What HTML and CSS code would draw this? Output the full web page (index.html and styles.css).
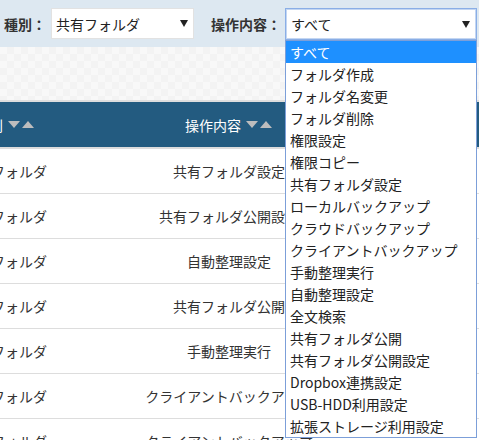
FILE: index.html
```html
<!DOCTYPE html>
<html lang="ja">
<head>
<meta charset="utf-8">
<link rel="stylesheet" href="styles.css">
</head>
<body>
<div class="filterbar">
  <span class="label label-type">種別：</span>
  <div class="select select-type">
    <span class="select-text">共有フォルダ</span>
    <span class="caret"></span>
  </div>
  <span class="label label-op">操作内容：</span>
  <div class="select select-op">
    <span class="select-text">すべて</span>
    <span class="caret"></span>
    <ul class="dropdown">
      <li class="selected">すべて</li>
      <li>フォルダ作成</li>
      <li>フォルダ名変更</li>
      <li>フォルダ削除</li>
      <li>権限設定</li>
      <li>権限コピー</li>
      <li>共有フォルダ設定</li>
      <li>ローカルバックアップ</li>
      <li>クラウドバックアップ</li>
      <li>クライアントバックアップ</li>
      <li>手動整理実行</li>
      <li>自動整理設定</li>
      <li>全文検索</li>
      <li>共有フォルダ公開</li>
      <li>共有フォルダ公開設定</li>
      <li>Dropbox連携設定</li>
      <li>USB-HDD利用設定</li>
      <li>拡張ストレージ利用設定</li>
    </ul>
  </div>
</div>
<div class="toolarea"></div>
<table class="log">
  <thead>
    <tr>
      <th class="c1">種別<svg class="sort" width="27" height="8" viewBox="0 0 27 8"><polygon points="0,0 12,0 6,7" /><polygon points="14,7 26,7 20,0" /></svg></th>
      <th class="c2">操作内容<svg class="sort" width="27" height="8" viewBox="0 0 27 8"><polygon points="0,0 12,0 6,7" /><polygon points="14,7 26,7 20,0" /></svg></th>
      <th class="c3"></th>
    </tr>
  </thead>
  <tbody>
    <tr><td>共有フォルダ</td><td>共有フォルダ設定</td><td></td></tr>
    <tr><td>共有フォルダ</td><td>共有フォルダ公開設定</td><td></td></tr>
    <tr><td>共有フォルダ</td><td>自動整理設定</td><td></td></tr>
    <tr><td>共有フォルダ</td><td>共有フォルダ公開</td><td></td></tr>
    <tr><td>共有フォルダ</td><td>手動整理実行</td><td></td></tr>
    <tr><td>共有フォルダ</td><td>クライアントバックアップ</td><td></td></tr>
    <tr><td>共有フォルダ</td><td>クライアントバックアップ</td><td></td></tr>
  </tbody>
</table>
</body>
</html>
```
FILE: styles.css
```css
html, body {
  margin: 0;
  padding: 0;
}
body {
  width: 479px;
  height: 440px;
  overflow: hidden;
  font-family: "Noto Sans CJK JP", "Noto Sans", sans-serif;
  font-size: 14px;
  color: #333;
  background: #fff;
}
.filterbar {
  height: 47px;
  background: #dde8f1;
  display: flex;
  align-items: center;
  padding-left: 4px;
  box-sizing: border-box;
}
.label {
  font-weight: bold;
  color: #333;
  line-height: 20px;
  white-space: nowrap;
}
.label-type { margin-right: 5px; }
.label-op { margin-left: 17px; margin-right: 4px; }
.select {
  position: relative;
  background: #fff;
  box-sizing: border-box;
  display: flex;
  align-items: center;
  color: #222;
}
.select-type {
  width: 143px;
  height: 31px;
  border: 1px solid #e2e2e2;
  padding-left: 4px;
}
.select-type .caret { margin-right: 5px; }
.select-op {
  width: 192px;
  height: 32px;
  border: 1px solid #8aaee6;
  box-shadow: inset 0 0 0 1px #c3d6f2;
  padding-left: 5px;
  margin-top: 1px;
}
.select-op .caret { margin-right: 6px; }
.select-text {
  flex: 1;
  line-height: 20px;
}
.caret {
  width: 0;
  height: 0;
  border-left: 4px solid transparent;
  border-right: 4px solid transparent;
  border-top: 7px solid #222;
}
.dropdown {
  position: absolute;
  top: 31px;
  left: -1px;
  width: 192px;
  box-sizing: border-box;
  margin: 0;
  padding: 0;
  list-style: none;
  background: #fff;
  border: 1px solid #7c9fd9;
  z-index: 10;
}
.dropdown li {
  height: 22px;
  line-height: 22px;
  padding-left: 4px;
  color: #222;
  white-space: nowrap;
}
.dropdown li.selected {
  background: #1e90ff;
  color: #fff;
}
.toolarea {
  height: 53px;
  background: repeating-conic-gradient(#f3f3f3 0 25%, #f8f8f8 0 50%) 0 0 / 14px 14px;
  border-bottom: 2px solid #dedede;
}
.log {
  border-collapse: collapse;
  margin-left: -51px;
  table-layout: fixed;
  width: 700px;
}
.log th {
  height: 45px;
  background: #235b80;
  color: #fff;
  font-weight: normal;
  text-align: center;
  padding: 0;
  border-bottom: 2px solid #dcdcdc;
  white-space: nowrap;
}
.log .c1 { width: 112px; }
.log .c2 { width: 336px; }
.log .c3 { width: 252px; }
.sort {
  fill: #bdbdbd;
  vertical-align: 2px;
  margin-left: 5px;
}
.log td {
  height: 44px;
  padding: 0;
  text-align: center;
  border-bottom: 1px solid #dddddd;
  white-space: nowrap;
  overflow: hidden;
  color: #333;
}
```
